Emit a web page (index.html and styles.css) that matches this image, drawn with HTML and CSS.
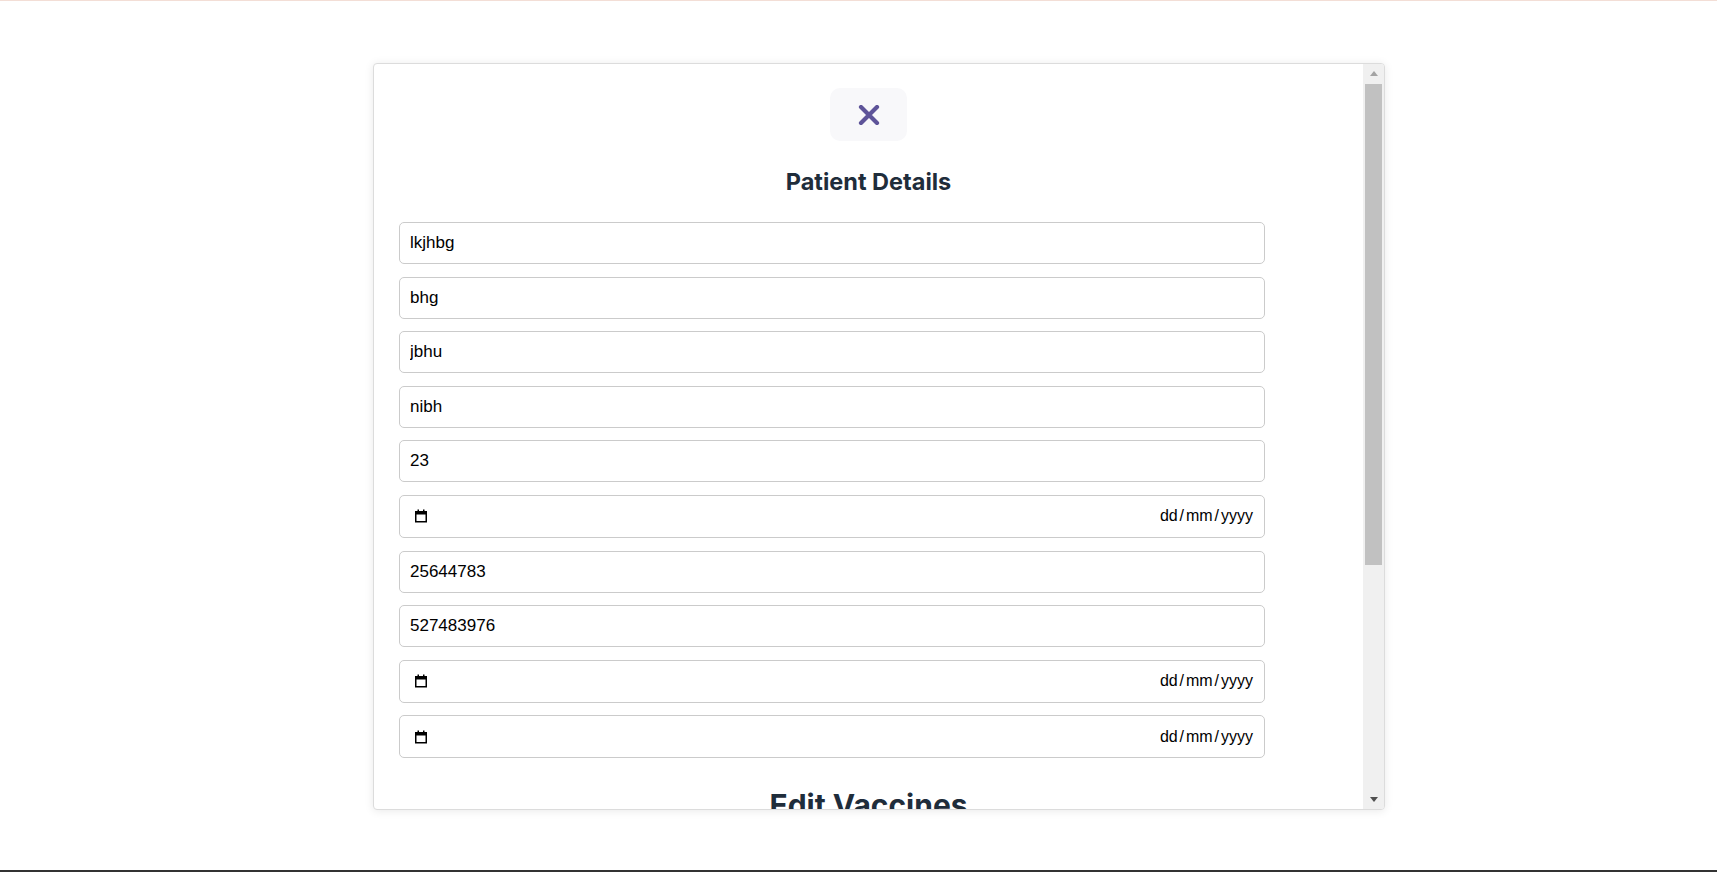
FILE: index.html
```html
<!DOCTYPE html>
<html lang="en">
<head>
<meta charset="utf-8">
<title>Patient Details</title>
<link rel="stylesheet" href="styles.css">
</head>
<body>
<div class="topline"></div>
<div class="page">
  <div class="modal">
    <div class="modal-body">
      <button class="close-btn" type="button" aria-label="Close">
        <svg width="22" height="20" viewBox="0 0 22 20"><path d="M3 2 L19 18 M19 2 L3 18" stroke="#5e5499" stroke-width="4.2" stroke-linecap="round" fill="none"/></svg>
      </button>
      <h2 class="title">Patient Details</h2>
      <form class="fields">
        <input class="field" type="text" value="lkjhbg">
        <input class="field" type="text" value="bhg">
        <input class="field" type="text" value="jbhu">
        <input class="field" type="text" value="nibh">
        <input class="field" type="text" value="23">
        <div class="field date">
          <svg class="cal" width="14" height="14" viewBox="0 0 14 14"><rect x="1.75" y="2.75" width="10.5" height="10" fill="none" stroke="#000" stroke-width="1.5"/><rect x="1" y="2" width="12" height="3.5" fill="#000"/><rect x="3.5" y="0.5" width="1.5" height="2.5" fill="#000"/><rect x="9" y="0.5" width="1.5" height="2.5" fill="#000"/></svg>
          <span class="ph">dd / mm / yyyy</span>
        </div>
        <input class="field" type="text" value="25644783">
        <input class="field" type="text" value="527483976">
        <div class="field date">
          <svg class="cal" width="14" height="14" viewBox="0 0 14 14"><rect x="1.75" y="2.75" width="10.5" height="10" fill="none" stroke="#000" stroke-width="1.5"/><rect x="1" y="2" width="12" height="3.5" fill="#000"/><rect x="3.5" y="0.5" width="1.5" height="2.5" fill="#000"/><rect x="9" y="0.5" width="1.5" height="2.5" fill="#000"/></svg>
          <span class="ph">dd / mm / yyyy</span>
        </div>
        <div class="field date">
          <svg class="cal" width="14" height="14" viewBox="0 0 14 14"><rect x="1.75" y="2.75" width="10.5" height="10" fill="none" stroke="#000" stroke-width="1.5"/><rect x="1" y="2" width="12" height="3.5" fill="#000"/><rect x="3.5" y="0.5" width="1.5" height="2.5" fill="#000"/><rect x="9" y="0.5" width="1.5" height="2.5" fill="#000"/></svg>
          <span class="ph">dd / mm / yyyy</span>
        </div>
      </form>
      <h2 class="section-title">Edit Vaccines</h2>
    </div>
    <div class="scrollbar" aria-hidden="true">
      <div class="sb-btn"><span class="tri up"></span></div>
      <div class="sb-track"><div class="sb-thumb"></div></div>
      <div class="sb-btn"><span class="tri down"></span></div>
    </div>
  </div>
</div>
<div class="bottomline"></div>
</body>
</html>
```

FILE: styles.css
```css
html, body {
  margin: 0;
  padding: 0;
  background: #fff;
  height: 872px;
  overflow: hidden;
}

body {
  display: flex;
  flex-direction: column;
  font-family: "Liberation Sans", Arial, sans-serif;
}

.topline {
  height: 1px;
  background: #f3ded6;
  flex: none;
}

.page {
  flex: 1;
  padding: 62px 0 0 373px;
  box-sizing: border-box;
}

.bottomline {
  height: 2px;
  background: #333;
  flex: none;
}

.modal {
  width: 1012px;
  height: 747px;
  box-sizing: border-box;
  border: 1px solid #dcdcdc;
  border-radius: 4px;
  background: #fff;
  box-shadow: 0 1px 10px rgba(0, 0, 0, 0.09);
  display: flex;
  overflow: hidden;
}

.modal-body {
  flex: 1;
  overflow: hidden;
  padding: 24px 25px 0 25px;
  display: flex;
  flex-direction: column;
  align-items: center;
}

.close-btn {
  width: 77px;
  height: 53px;
  border: none;
  border-radius: 10px;
  background: #f8f8fa;
  display: flex;
  align-items: center;
  justify-content: center;
  padding: 0;
  flex: none;
}

.title {
  margin: 26px 0 0;
  font-family: Inter, "Noto Sans", sans-serif;
  font-weight: 700;
  font-size: 23.5px;
  line-height: 29px;
  color: #1f2d3b;
  text-align: center;
}

.fields {
  margin: 26px 0 0;
  align-self: flex-start;
  width: 866px;
  display: flex;
  flex-direction: column;
  gap: 12.6px;
}

.field {
  box-sizing: border-box;
  height: 42px;
  width: 100%;
  margin: 0;
  border: 1px solid #cbcbcb;
  border-radius: 5px;
  padding: 0 10px;
  font-family: "Liberation Sans", Arial, sans-serif;
  font-size: 17px;
  color: #000;
  background: #fff;
  outline: none;
}

.field.date {
  height: 43px;
  display: flex;
  align-items: center;
  justify-content: space-between;
  padding: 0 11px 0 14px;
}

.cal {
  display: block;
  flex: none;
}

.ph {
  font-size: 16px;
  color: #000;
  word-spacing: -2.5px;
}

.section-title {
  margin: 29px 0 0;
  font-family: Inter, "Noto Sans", sans-serif;
  font-weight: 700;
  font-size: 30px;
  line-height: 36px;
  color: #1f2d3b;
  text-align: center;
  flex: none;
}

.scrollbar {
  width: 21px;
  flex: none;
  background: #f0f0f0;
  display: flex;
  flex-direction: column;
}

.sb-btn {
  height: 19px;
  display: flex;
  align-items: center;
  justify-content: center;
  flex: none;
}

.sb-track {
  flex: 1;
  padding: 1px 2px 0;
}

.sb-thumb {
  height: 481px;
  background: #c1c1c1;
}

.tri {
  width: 0;
  height: 0;
  border-left: 4.5px solid transparent;
  border-right: 4.5px solid transparent;
}

.tri.up {
  border-bottom: 5px solid #a3a3a3;
}

.tri.down {
  border-top: 5px solid #505050;
}
```
